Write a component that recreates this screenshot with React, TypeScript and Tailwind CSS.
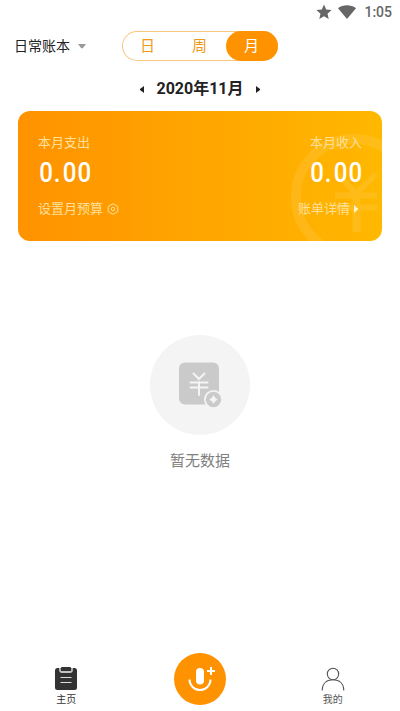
import React from "react";

const cjk = "font-['Roboto','Noto_Sans_CJK_SC',sans-serif]";

function StatusBar() {
  return (
    <div className="flex h-6 items-center justify-end pr-2 text-[#666666]">
      <svg width="16" height="16" viewBox="0 0 16 16" className="mr-[6px]">
        <path fill="currentColor" d="M8 .6l2.200 5 5.400.5-4.100 3.600 1.200 5.300L8 12.200 3.300 15l1.200-5.300L.4 6.100l5.400-.5z" />
      </svg>
      <svg width="18" height="14" viewBox="0 0 18 14" className="mr-2">
        <path fill="currentColor" d="M0 3.200C5.200-.6 12.800-.6 18 3.200L9 14z" />
      </svg>
      <span className="text-[14px] font-medium leading-6">1:05</span>
    </div>
  );
}

function Header() {
  return (
    <header className="flex h-11 items-center pl-[14px]">
      <div className="flex w-[108px] items-center">
        <span className="text-[14px] leading-5 text-[#222]">日常账本</span>
        <svg width="8" height="5" viewBox="0 0 8 5" className="ml-2">
          <path fill="#999" d="M0 0h8L4.700 4.300H3.300z" />
        </svg>
      </div>
      <div className="flex h-[30px] w-[156px] rounded-full text-center text-[15px] leading-[30px] text-[#f09a1c] shadow-[inset_0_0_0_1px_#f8c581]">
        <span className="w-[52px] pr-px">日</span>
        <span className="w-[52px] pr-px">周</span>
        <span className="w-[52px] rounded-full bg-[#ff9200] pr-px text-white">月</span>
      </div>
    </header>
  );
}

function MonthPicker() {
  return (
    <div className="flex h-[43px] items-center justify-center pb-px text-[#222]">
      <svg width="4" height="7" viewBox="0 0 4 7">
        <path fill="currentColor" d="M4 0v7L0 4V3z" />
      </svg>
      <span className="w-[112px] text-center text-[16px] font-bold leading-6">2020年11月</span>
      <svg width="4" height="7" viewBox="0 0 4 7">
        <path fill="currentColor" d="M0 0v7L4 4V3z" />
      </svg>
    </div>
  );
}

function Amount() {
  return (
    <svg width="52" height="40" viewBox="0 0 52 40" className="-my-[5px] block shrink-0 overflow-visible">
      <text
        x="0.200 17.200 27.600 44.800"
        y="30"
        transform="scale(0.86 1)"
        fill="#fff"
        fontFamily="Roboto, sans-serif"
        fontWeight="500"
        fontSize="28"
      >
        0.00
      </text>
    </svg>
  );
}

function SummaryCard() {
  return (
    <section className="relative mx-[18px] h-[130px] overflow-hidden rounded-xl bg-linear-to-r from-[#ff9200] to-[#ffb800]">
      <svg className="absolute left-0 top-0" width="364" height="130" viewBox="0 0 364 130">
        <g fill="none" stroke="#fff" opacity="0.09">
          <circle cx="336" cy="86" r="58" strokeWidth="10" />
          <path strokeWidth="6" d="M319 63l19.500 19.500L358 63M317 84.500h42M317 96.500h42" />
          <path strokeWidth="8" d="M338.500 82v39" />
        </g>
      </svg>
      <div className="relative flex justify-between px-5 pt-[22px] text-[13px] text-[#ffe09b]">
        <div>
          <p className="h-5 leading-5">本月支出</p>
          <div className="mt-1 flex h-[30px] pl-px"><Amount /></div>
          <div className="mt-3 flex h-5 items-center leading-5">
            设置月预算
            <svg width="12" height="12" viewBox="0 0 12 12" className="mb-px ml-1" fill="none" stroke="currentColor">
              <path d="M6 .7l4.800 2.700v5.200L6 11.300 1.200 8.600V3.400z" />
              <circle cx="6" cy="6" r="1.800" />
            </svg>
          </div>
        </div>
        <div className="text-right">
          <p className="h-5 leading-5">本月收入</p>
          <div className="mt-1 flex h-[30px] justify-end"><Amount /></div>
          <div className="mt-3 flex h-5 items-center justify-end pr-1 leading-5">
            账单详情
            <svg width="4" height="8" viewBox="0 0 4 8" className="mb-px ml-1">
              <path fill="#fff3cf" d="M0 0v8l4-3.500v-1z" />
            </svg>
          </div>
        </div>
      </div>
    </section>
  );
}

function EmptyState() {
  return (
    <main className="flex flex-1 flex-col items-center pt-[94px]">
      <svg width="100" height="100" viewBox="0 0 100 100" fill="none">
        <circle cx="50" cy="50" r="50" fill="#f4f4f4" />
        <rect x="29" y="27.500" width="40" height="42" rx="6" fill="#cacaca" />
        <path stroke="#f4f4f4" strokeWidth="2" strokeLinecap="round" d="M43.500 38.500l5.500 5.500 5.500-5.500M40.500 47.500h17M40.500 52.500h17M49 47v13" />
        <circle cx="63.500" cy="64.500" r="9.500" fill="#f4f4f4" />
        <circle cx="63.500" cy="64.500" r="7.700" fill="#cacaca" />
        <path fill="#f4f4f4" d="M63.500 60.300q1.500 2.700 4.200 4.200-2.700 1.500-4.200 4.200-1.500-2.700-4.200-4.200 2.700-1.500 4.200-4.200z" />
      </svg>
      <p className="mt-[14px] text-[15px] leading-6 text-[#808080]">暂无数据</p>
    </main>
  );
}

function TabBar() {
  return (
    <nav className="grid h-[65px] grid-cols-3 text-[10px] leading-[14px] text-[#333]">
      <div className="flex flex-col items-center pt-5">
        <svg width="22" height="27" viewBox="0 0 22 27" fill="none" className="-ml-[1px]">
          <rect x="0" y="2" width="22" height="22" rx="2.500" fill="#333" />
          <path d="M5 2v2q0 2 2 2h8q2 0 2-2V2" stroke="#c4c4c4" strokeWidth="1.800" />
          <path d="M5.900 4V2.200q0-1.200 1.200-1.200h7.800q1.200 0 1.200 1.200V4q0 1-1 1H6.900q-1 0-1-1z" fill="#333" />
          <path d="M5.500 11.500h11M5.500 16.500h11" stroke="#ddd" strokeWidth="1.200" />
        </svg>
        <span className="-ml-[1px]">主页</span>
      </div>
      <div className="flex flex-col items-center pt-[7px]">
        <svg width="52" height="52" viewBox="0 0 52 52" fill="none">
          <circle cx="26" cy="26" r="26" fill="#ff9200" />
          <rect x="22" y="15" width="8" height="16.500" rx="4" fill="#fff" />
          <path stroke="#fff" strokeWidth="2" d="M15.500 26.500a10.500 10.500 0 0 0 21 0M33 18h8M37 14v8" />
        </svg>
      </div>
      <div className="flex flex-col items-center pt-5 text-[#555]">
        <svg width="24" height="27" viewBox="0 0 24 27" fill="none" stroke="#555" strokeWidth="1.100">
          <circle cx="12" cy="8" r="5.700" />
          <path d="M1.200 24.500C1.200 17.500 5.500 13.800 12 13.800s10.800 3.700 10.800 10.700" />
        </svg>
        <span className="-ml-px">我的</span>
      </div>
    </nav>
  );
}

export default function App() {
  return (
    <div className={`flex h-[711px] w-[400px] flex-col bg-white ${cjk}`}>
      <StatusBar />
      <Header />
      <MonthPicker />
      <SummaryCard />
      <EmptyState />
      <TabBar />
    </div>
  );
}
